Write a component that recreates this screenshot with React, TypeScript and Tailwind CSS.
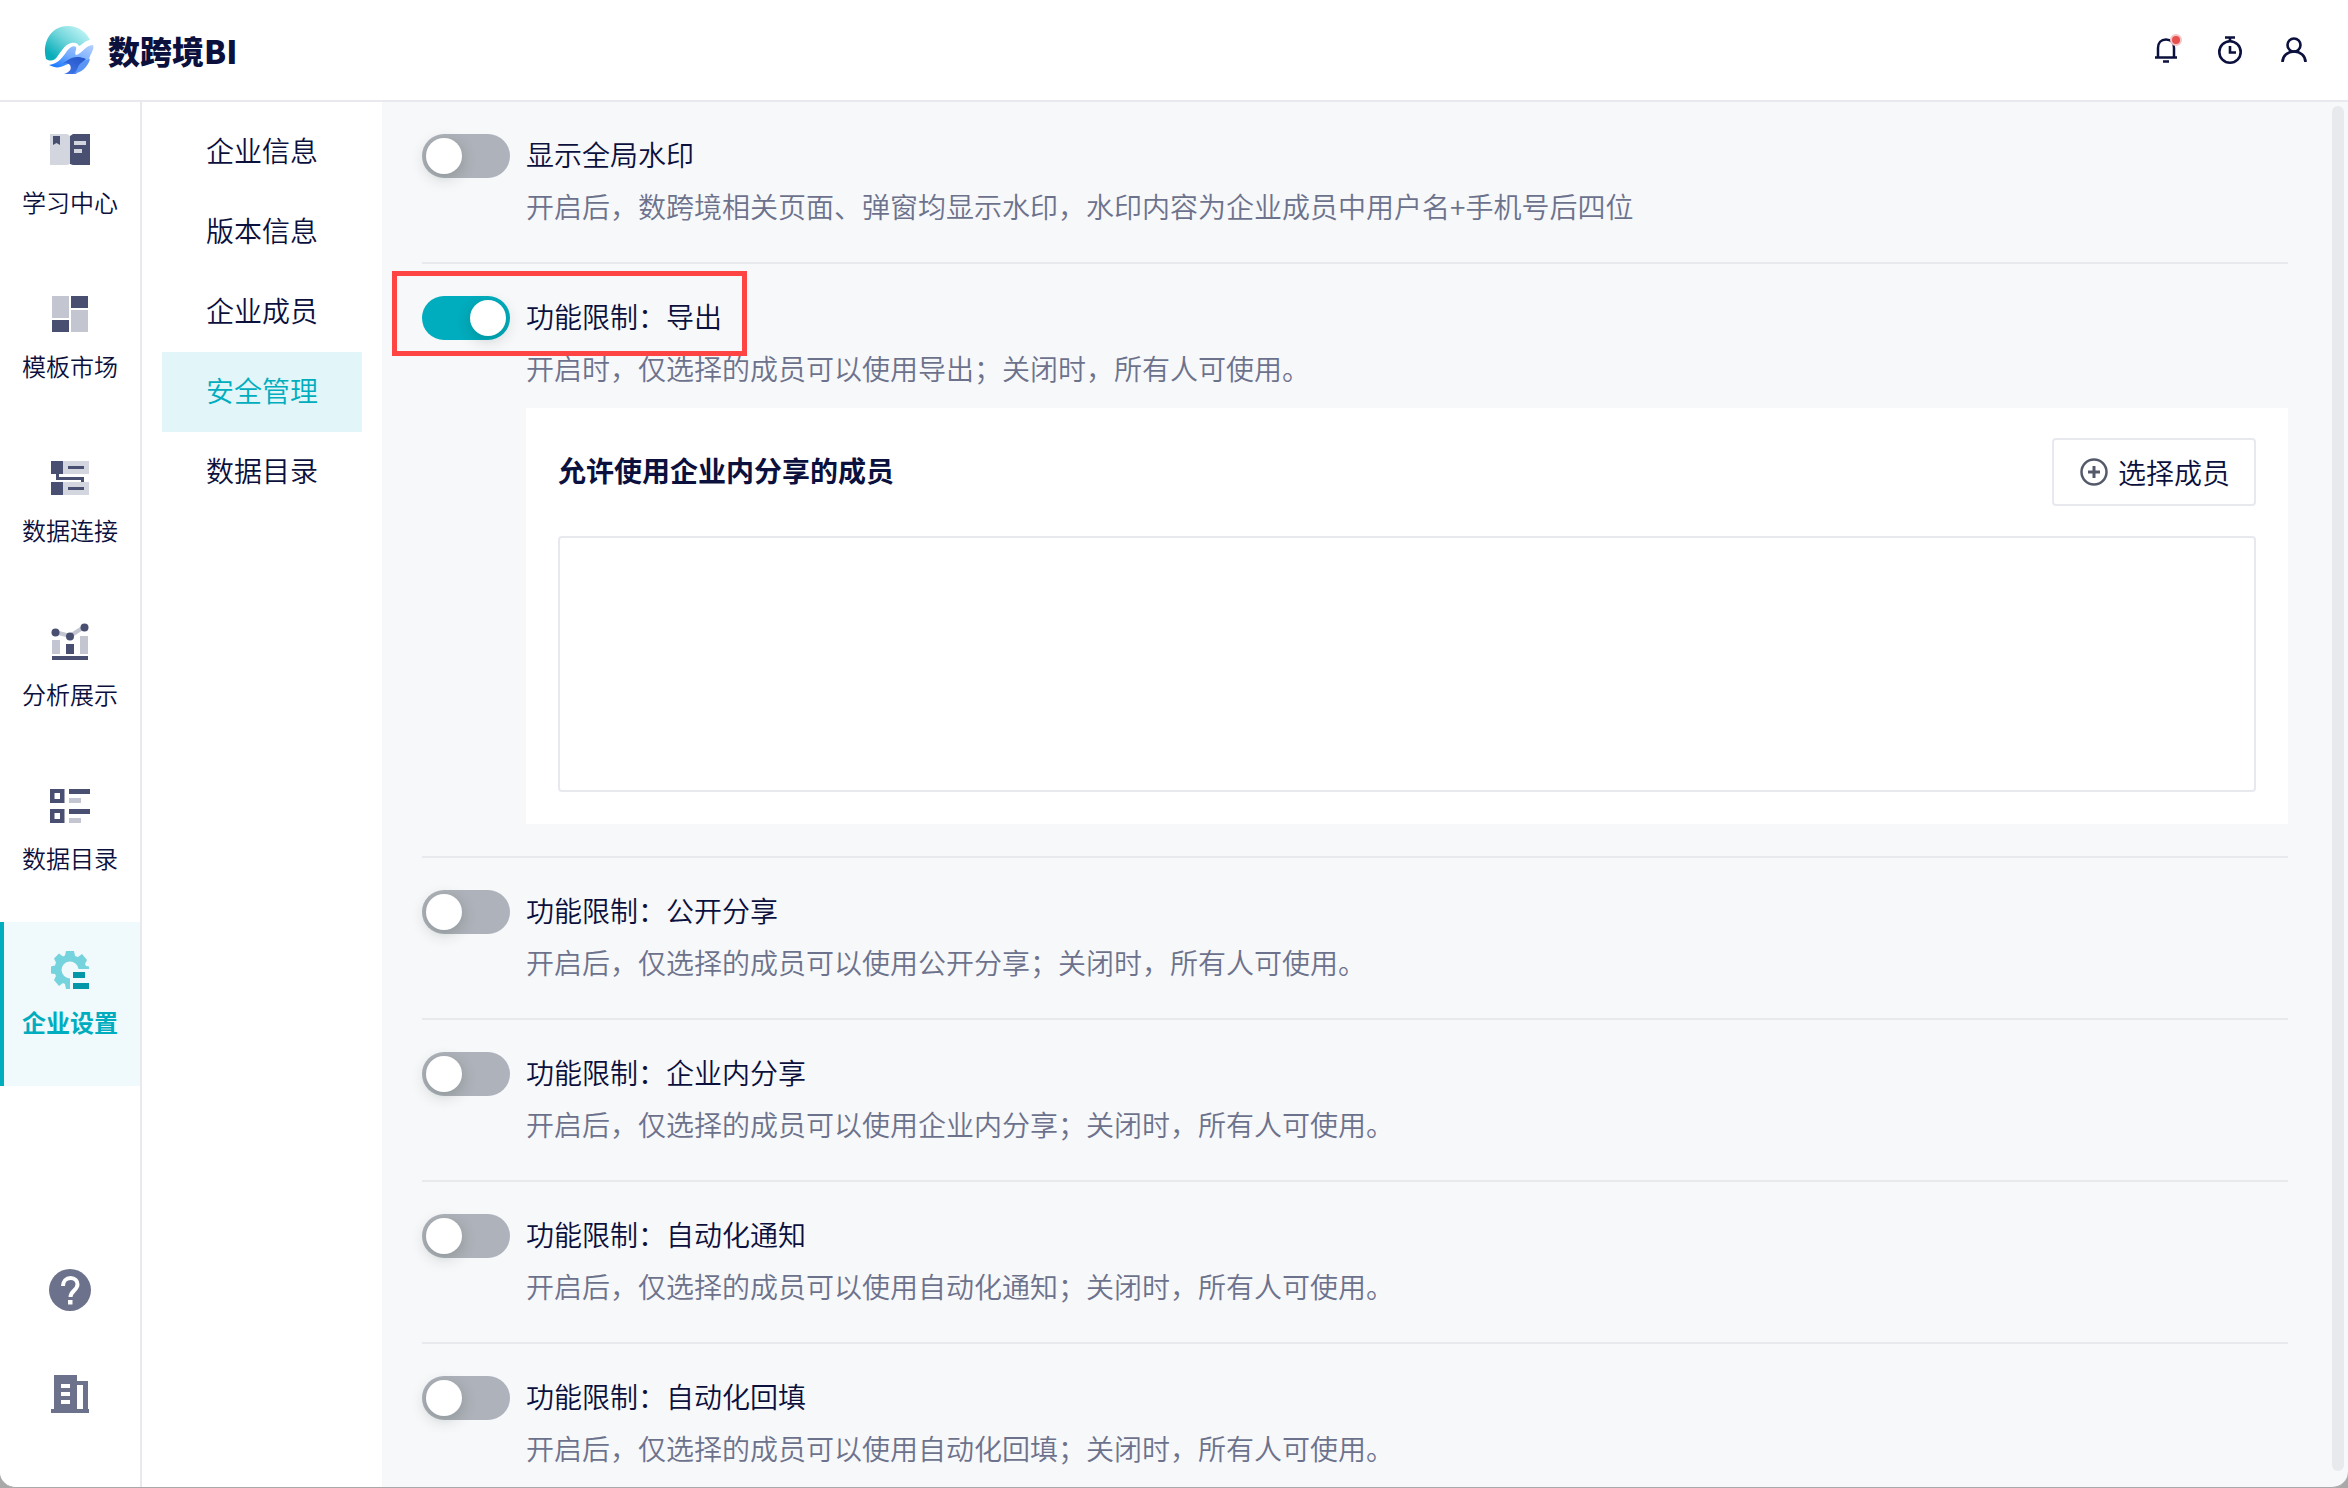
import React, { useState } from "react";

const DARK = "#484f70";
const PALE = "#c3c5d0";

function Logo() {
  return (
    <svg viewBox="0 0 50 48" className="h-12 w-[50px]" aria-hidden="true">
      <defs>
        <linearGradient id="sun" x1="0.85" y1="0.1" x2="0.1" y2="0.8">
          <stop offset="0" stopColor="#bdf3f5" />
          <stop offset="0.5" stopColor="#6fd5da" />
          <stop offset="1" stopColor="#0aaebb" />
        </linearGradient>
        <linearGradient id="wave" x1="1" y1="0" x2="0.1" y2="0.9">
          <stop offset="0" stopColor="#b5d0ff" />
          <stop offset="0.55" stopColor="#72abff" />
          <stop offset="1" stopColor="#1677ff" />
        </linearGradient>
        <linearGradient id="deep" x1="0.9" y1="0" x2="0.2" y2="1">
          <stop offset="0" stopColor="#2456c8" />
          <stop offset="1" stopColor="#3f74e8" />
        </linearGradient>
      </defs>
      <path fill="url(#sun)" d="M2 33C-2 19 5 0 24 0c11 0 19 7 22 14-4 0-7 4-11 6-1-3-4-4-8-3-7 2-10 9-14 14-2 3-6 5-11 2z" />
      <path fill="url(#wave)" d="M5 39c9-1 14-8 18-14 3-4 7-6 9-4 1 3 -2 6 0 8 6-1 9-10 17-10 2 4-3 9-4 15-2 5-5 8-9 10-3-4-2-8-8-7-8 1-12 8-23 2z" />
      <path fill="url(#deep)" d="M18 38c5-3 8-7 15-7 5 0 9 2 9 2s-6 5-10 15H20c6-2 8-5 6-9-2-2-5-2-8-1z" />
      <path fill="#5b95f5" d="M46 33c-2 8-9 14-17 15 5-3 4-8 8-11 3-3 6-3 9-4z" />
    </svg>
  );
}

function BookIcon() {
  return (
    <svg viewBox="0 0 40 40" className="size-10" aria-hidden="true">
      <path fill="#d3d5df" d="M0 4h17l3 2v28l-3 1H0z" />
      <path fill={DARK} d="M3 6h7v9l-3.500-2L3 15z" />
      <path fill={DARK} d="M20 6l3-2h18v31H23l-3-1z" />
      <path fill="#d3d5df" d="M24 11h12v4H24zM24 19h8v4h-8z" />
    </svg>
  );
}

function TemplateIcon() {
  return (
    <svg viewBox="0 0 40 40" className="size-10" aria-hidden="true">
      <path fill={PALE} d="M2 2h17v22H2zM21 16h17v22H21z" />
      <path fill={DARK} d="M21 2h17v12H21zM2 26h17v12H2z" />
    </svg>
  );
}

function ConnectIcon() {
  return (
    <svg viewBox="0 0 40 40" className="size-10" aria-hidden="true">
      <path fill="#d3d5df" d="M13 3h26v13H13zM13 24h26v13H13z" />
      <path fill={DARK} d="M1 3h12v13H9v3h25v5h-3v-2H6v-6H1zM1 24h12v13H1zM18 8h16v3H18zM18 29h16v3H18z" />
    </svg>
  );
}

function ChartIcon() {
  return (
    <svg viewBox="0 0 40 40" className="size-10" aria-hidden="true">
      <path fill={PALE} d="M2 18h8v14H2zM30 14h8v18h-8z" />
      <path stroke={PALE} strokeWidth="4" fill="none" d="M5 10l15 4L34 5" />
      <path fill={DARK} d="M16 22h8v10h-8zM2 34h36v4H2z" />
      <circle cx="5.500" cy="10.500" r="4" fill={DARK} />
      <circle cx="20" cy="14.500" r="4" fill={DARK} />
      <circle cx="34.500" cy="5.500" r="4" fill={DARK} />
    </svg>
  );
}

function CatalogIcon() {
  return (
    <svg viewBox="0 0 40 40" className="size-10" aria-hidden="true">
      <path fill={DARK} fillRule="evenodd" d="M0 3h14.500v14H0zM4.500 7v6h5.500V7zM0 23h14.500v14H0zM4.500 27v6h5.500v-6zM19 3h21v5H19zM19 23h21v5H19z" />
      <path fill={PALE} d="M19 12h12v5H19zM19 32h12v5H19z" />
    </svg>
  );
}

function SettingsIcon() {
  return (
    <svg viewBox="0 0 40 40" className="size-10" aria-hidden="true">
      <path
        fill="#74d3dc"
        d="M16 1h8l1 5 3 1 4-3 5 6-2 4 1 2 3 .5V19H28.500A8.500 8.500 0 1 0 20 28.500V39h-4l-1-5-2-1-4 3-5-6 2-4-1-2-4-.5v-7l4-1 1-3-2-4 5-5 4 3 2-1z"
      />
      <path fill="#0497a7" d="M23 22h12v6H23zM23 33h16v6H23z" />
    </svg>
  );
}

const railItems = [
  { label: "学习中心", Icon: BookIcon },
  { label: "模板市场", Icon: TemplateIcon },
  { label: "数据连接", Icon: ConnectIcon },
  { label: "分析展示", Icon: ChartIcon },
  { label: "数据目录", Icon: CatalogIcon },
  { label: "企业设置", Icon: SettingsIcon, active: true },
];

const menuItems = ["企业信息", "版本信息", "企业成员", "安全管理", "数据目录"];

function Header() {
  return (
    <header className="flex h-[102px] shrink-0 items-center justify-between border-b-2 border-[#e8e9ee] bg-white pr-[38px] pl-11">
      <a href="#home" className="flex items-center gap-3.5">
        <Logo />
        <span className="text-[32px] leading-10 font-black">数跨境BI</span>
      </a>
      <div className="flex items-center gap-8">
        <button type="button" aria-label="通知" className="relative size-8">
          <svg viewBox="0 0 32 32" className="size-8" fill="none" stroke="#0b103d" strokeWidth="2.500" aria-hidden="true">
            <path d="M5 23.500h22M8 23V14c0-5 3-8.500 8-8.500s8 3.500 8 8.500v9M13 27.500h6" />
          </svg>
          <span className="absolute top-0 right-0 size-3 rounded-full border-2 border-[#f6c5c5] bg-[#e85050]" />
        </button>
        <button type="button" aria-label="计时" className="size-8">
          <svg viewBox="0 0 32 32" className="size-8" fill="none" stroke="#0b103d" strokeWidth="2.600" aria-hidden="true">
            <circle cx="16" cy="18" r="10.700" />
            <path d="M11 3.500h10M16 4v4M16 12v6.500h6" />
          </svg>
        </button>
        <button type="button" aria-label="账户" className="size-8">
          <svg viewBox="0 0 32 32" className="size-8" fill="none" stroke="#0b103d" strokeWidth="2.600" aria-hidden="true">
            <circle cx="16" cy="11" r="6.500" />
            <path d="M4.500 28c0-6 5-10.500 11.500-10.500S27.500 22 27.500 28" />
          </svg>
        </button>
      </div>
    </header>
  );
}

function Rail() {
  return (
    <nav className="flex w-[142px] shrink-0 flex-col border-r-2 border-[#e8e9ee] bg-white">
      {railItems.map(({ label, Icon, active }) => (
        <a
          key={label}
          href={`#${label}`}
          className={
            active
              ? "flex h-[164px] flex-col items-center gap-3.5 border-l-4 border-[#00adbe] bg-[#f0f9fb] pt-7 pr-1 text-2xl leading-9 font-bold text-[#00adbe]"
              : "flex h-[164px] flex-col items-center gap-3.5 pt-7 text-2xl leading-9"
          }
        >
          <Icon />
          {label}
        </a>
      ))}
      <div className="mt-auto flex flex-col items-center gap-16 pb-[74px]">
        <button type="button" aria-label="帮助" className="size-[42px]">
          <svg viewBox="0 0 42 42" className="size-[42px]" aria-hidden="true">
            <circle cx="21" cy="21" r="21" fill="#6d728c" />
            <path d="M14 17c0-4.500 3-8 7.500-8s7 3 7 6.500c0 5.500-7 6.500-7 12.500" fill="none" stroke="#fff" strokeWidth="4" />
            <path fill="#fff" d="M19 31h4.500v4.500H19z" />
          </svg>
        </button>
        <button type="button" aria-label="企业" className="h-[38px] w-[38px]">
          <svg viewBox="0 0 38 38" className="size-[38px]" aria-hidden="true">
            <path fill="#6d728c" fillRule="evenodd" d="M3 0h23v6h11v28h1v4H0v-4h3zM26 10v24h6V10zM10 9v4h9V9zM10 17v4h9v-4zM10 25v4h9v-4z" />
          </svg>
        </button>
      </div>
    </nav>
  );
}

function SubMenu() {
  return (
    <nav className="flex w-60 shrink-0 flex-col bg-white px-5 py-2.5">
      {menuItems.map((label) => (
        <a
          key={label}
          href={`#${label}`}
          className={
            label === "安全管理"
              ? "flex h-20 items-center justify-center bg-[#e2f6f9] pb-1 text-[28px] leading-10 text-[#00adbe]"
              : "flex h-20 items-center justify-center pb-1 text-[28px] leading-10"
          }
        >
          {label}
        </a>
      ))}
    </nav>
  );
}

type SettingProps = {
  title: string;
  note: string;
  defaultOn?: boolean;
  marked?: boolean;
  children?: React.ReactNode;
};

function Setting({ title, note, defaultOn = false, marked = false, children }: SettingProps) {
  const [on, setOn] = useState(defaultOn);
  return (
    <section className="relative border-b-2 border-[#e8e9ec] pt-8 pb-8">
      <label className="flex h-11 items-start gap-4">
        <input
          type="checkbox"
          role="switch"
          checked={on}
          onChange={() => setOn(!on)}
          className="peer sr-only"
        />
        <span
          className={
            on
              ? "flex h-11 w-[88px] shrink-0 items-center justify-end rounded-full bg-[#00adbe] px-1"
              : "flex h-11 w-[88px] shrink-0 items-center rounded-full bg-[#aeb2ba] px-1"
          }
        >
          <span className="size-9 rounded-full bg-white shadow-[0_4px_16px_rgba(0,35,11,0.2)]" />
        </span>
        <span className="text-[28px] leading-10">{title}</span>
      </label>
      <div className="pl-[104px]">
        <p className="mt-1.5 h-[46px] text-[28px] leading-11 text-[#6d728c]">{note}</p>
        {children}
      </div>
      {marked && (
        <div className="pointer-events-none absolute top-[7px] -left-[30px] h-[85px] w-[355px] border-[5px] border-[#ff4444]" />
      )}
    </section>
  );
}

function MemberCard() {
  return (
    <div className="mt-4 bg-white px-8 pt-[30px] pb-8">
      <div className="flex items-center justify-between">
        <h2 className="pb-1 text-[28px] leading-10 font-bold">允许使用企业内分享的成员</h2>
        <button
          type="button"
          className="flex h-[68px] items-center gap-2.5 rounded border-2 border-[#e8e9ee] bg-white pr-6 pl-[26px] text-[28px] leading-10"
        >
          <svg viewBox="0 0 28 28" className="size-7" fill="none" stroke="#555a6b" strokeWidth="2.500" aria-hidden="true">
            <circle cx="14" cy="14" r="12.500" />
            <path strokeWidth="3" d="M8 14h12M14 8v12" />
          </svg>
          选择成员
        </button>
      </div>
      <div className="mt-[30px] h-64 rounded border-2 border-[#e8e9ee]" />
    </div>
  );
}

export default function App() {
  return (
    <div className="h-screen bg-[#a9a9a9]">
      <div className="flex h-full flex-col overflow-hidden rounded-b-2xl border-b border-[#a9a9a9] bg-[#f7f8fa] font-['Noto_Sans_CJK_SC',sans-serif] font-[350] text-[#0b103d]">
        <Header />
        <div className="flex min-h-0 flex-1">
          <Rail />
          <SubMenu />
          <main className="flex min-w-0 flex-1 pr-1">
            <div className="min-w-0 flex-1 overflow-hidden pr-11 pl-10">
              <Setting
                title="显示全局水印"
                note="开启后，数跨境相关页面、弹窗均显示水印，水印内容为企业成员中用户名+手机号后四位"
              />
              <Setting title="功能限制：导出" note="开启时，仅选择的成员可以使用导出；关闭时，所有人可使用。" defaultOn marked>
                <MemberCard />
              </Setting>
              <Setting title="功能限制：公开分享" note="开启后，仅选择的成员可以使用公开分享；关闭时，所有人可使用。" />
              <Setting title="功能限制：企业内分享" note="开启后，仅选择的成员可以使用企业内分享；关闭时，所有人可使用。" />
              <Setting title="功能限制：自动化通知" note="开启后，仅选择的成员可以使用自动化通知；关闭时，所有人可使用。" />
              <Setting title="功能限制：自动化回填" note="开启后，仅选择的成员可以使用自动化回填；关闭时，所有人可使用。" />
            </div>
            <div className="mt-1 mb-4 w-3 rounded-full bg-[#e8e9ec]" />
          </main>
        </div>
      </div>
    </div>
  );
}
